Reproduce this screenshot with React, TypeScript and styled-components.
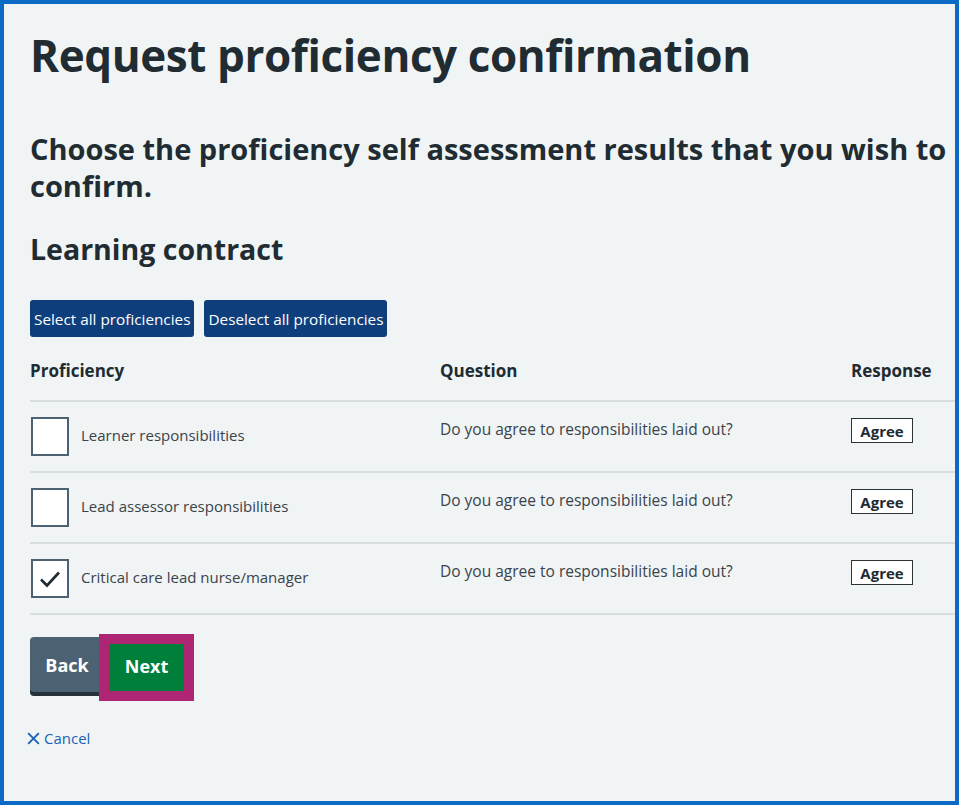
import React from "react";
import styled, { createGlobalStyle } from "styled-components";

const GlobalStyle = createGlobalStyle`
  html, body {
    margin: 0;
    padding: 0;
    background: #ffffff;
  }
  body {
    font-family: "Open Sans", "Noto Sans", sans-serif;
    color: #212b32;
  }
`;

const Frame = styled.div`
  box-sizing: border-box;
  width: 959px;
  height: 805px;
  border: 4px solid #0b6bc4;
  background: #f0f4f5;
  padding: 23px 0 0 26px;
  overflow: hidden;
`;

const Title = styled.h1`
  margin: 0;
  font-size: 44px;
  line-height: 56px;
  font-weight: 700;
  letter-spacing: -0.4px;
`;

const Lead = styled.h2`
  margin: 47px 0 0;
  font-size: 29px;
  line-height: 37px;
  font-weight: 700;
  padding-right: 2px;
`;

const Section = styled.h3`
  margin: 27px 0 0;
  font-size: 28.5px;
  line-height: 36px;
  font-weight: 700;
`;

const Toolbar = styled.div`
  display: flex;
  gap: 10px;
  margin-top: 33px;
`;

const SmallButton = styled.button`
  font-family: inherit;
  font-size: 15.3px;
  color: #ffffff;
  background: #0f3e7d;
  border: none;
  border-radius: 3px;
  height: 37px;
  padding: 0 4px;
  cursor: pointer;
`;

const Grid = styled.div`
  display: grid;
  grid-template-columns: 410px 411px 1fr;
`;

const HeadCell = styled.div`
  font-size: 17px;
  font-weight: 700;
  padding: 23px 0 18px;
  line-height: 22px;
  border-bottom: 2px solid #d8dde0;
`;

const Cell = styled.div<{ $top?: boolean }>`
  display: flex;
  align-items: ${(p) => (p.$top ? "flex-start" : "center")};
  height: 71px;
  border-bottom: 2px solid #d8dde0;
  font-size: 15.5px;
  color: #3a434a;
  padding-top: ${(p) => (p.$top ? "16px" : "0")};
  box-sizing: border-box;
`;

const Box = styled.span`
  box-sizing: border-box;
  width: 38px;
  height: 39px;
  margin-left: 1px;
  border: 2px solid #4c6272;
  background: #ffffff;
  display: flex;
  align-items: center;
  justify-content: center;
  flex-shrink: 0;
`;

const Label = styled.span`
  margin-left: 12px;
  margin-bottom: 3px;
  font-size: 15px;
  color: #3a434a;
`;

const Tag = styled.span`
  box-sizing: border-box;
  display: inline-flex;
  align-items: center;
  justify-content: center;
  width: 62px;
  height: 25px;
  border: 1.5px solid #2c3338;
  background: #ffffff;
  font-size: 15px;
  font-weight: 700;
  color: #212b32;
`;

const Actions = styled.div`
  display: flex;
  align-items: center;
  gap: 5px;
  margin-top: 22px;
`;

const BackButton = styled.button`
  font-family: inherit;
  font-size: 18px;
  font-weight: 700;
  color: #ffffff;
  background: #4c6272;
  border: none;
  border-radius: 4px;
  width: 74px;
  height: 55px;
  box-shadow: 0 4px 0 #263139;
  margin-bottom: 4px;
`;

const NextButton = styled.button`
  font-family: inherit;
  font-size: 18px;
  font-weight: 700;
  color: #ffffff;
  background: #007f3b;
  border: none;
  width: 75px;
  height: 47px;
  margin-top: 2px;
  padding-bottom: 4px;
  box-shadow: 0 0 0 10px #ae2573;
  position: relative;
`;

const CancelLink = styled.a`
  display: inline-flex;
  align-items: center;
  gap: 3px;
  margin-top: 32px;
  margin-left: -4px;
  font-size: 15px;
  color: #1d62b5;
  text-decoration: none;
`;

const rows = [
  { name: "Learner responsibilities", checked: false },
  { name: "Lead assessor responsibilities", checked: false },
  { name: "Critical care lead nurse/manager", checked: true },
];

const App: React.FC = () => {
  return (
    <>
      <GlobalStyle />
      <Frame>
        <Title>Request proficiency confirmation</Title>
        <Lead>Choose the proficiency self assessment results that you wish to confirm.</Lead>
        <Section>Learning contract</Section>
        <Toolbar>
          <SmallButton>Select all proficiencies</SmallButton>
          <SmallButton>Deselect all proficiencies</SmallButton>
        </Toolbar>
        <Grid>
          <HeadCell>Proficiency</HeadCell>
          <HeadCell>Question</HeadCell>
          <HeadCell>Response</HeadCell>
          {rows.map((r) => (
            <React.Fragment key={r.name}>
              <Cell>
                <Box>
                  {r.checked && (
                    <svg width="22" height="18" viewBox="0 0 22 18">
                      <path d="M2 9.5 L8 15.5 L20 2.5" fill="none" stroke="#212b32" strokeWidth="2.6" />
                    </svg>
                  )}
                </Box>
                <Label>{r.name}</Label>
              </Cell>
              <Cell $top>Do you agree to responsibilities laid out?</Cell>
              <Cell $top>
                <Tag>Agree</Tag>
              </Cell>
            </React.Fragment>
          ))}
        </Grid>
        <Actions>
          <BackButton>Back</BackButton>
          <NextButton>Next</NextButton>
        </Actions>
        <div>
          <CancelLink href="#">
            <svg width="15" height="15" viewBox="0 0 14 14">
              <path d="M2 2 L12 12 M12 2 L2 12" stroke="#1d62b5" strokeWidth="1.8" />
            </svg>
            Cancel
          </CancelLink>
        </div>
      </Frame>
    </>
  );
};

export default App;
